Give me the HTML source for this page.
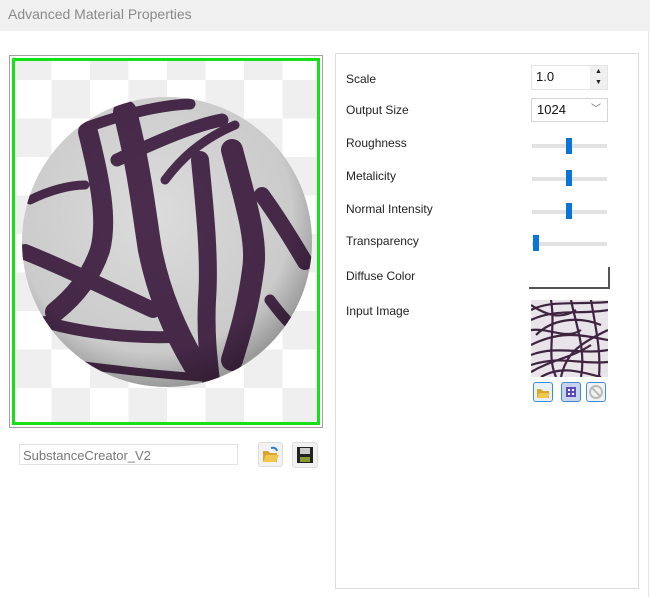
<!DOCTYPE html>
<html><head><style>
body{margin:0;width:650px;height:597px;background:#fff;position:relative;overflow:hidden;font-family:"Liberation Sans",sans-serif;}
.hdr{position:absolute;left:0;top:0;width:650px;height:31px;background:#f0f0f0;}
.hdr span{position:absolute;left:8px;top:6px;font-size:14px;color:#8a8a8a;}
.vl{position:absolute;left:648px;top:31px;width:1px;height:566px;background:#e6e6e6;}
.lab{position:absolute;left:346px;font-size:12px;color:#222;}
.panel{position:absolute;left:335px;top:53px;width:302px;height:534px;border:1px solid #dcdcdc;}
.track{position:absolute;left:532px;width:75px;height:4px;background:#e2e2e2;}
.thumb{position:absolute;width:6px;height:16px;background:#0a74d8;}
.ib{position:absolute;width:18px;height:18px;border:1px solid #3c8ad8;border-radius:3px;background:#e8f0fa;}
</style></head><body>
<div class="hdr"><span>Advanced Material Properties</span></div>
<div class="vl"></div>

<div style="position:absolute;left:9px;top:55px;width:312px;height:371px;border:1px solid #a0a0a0;"></div>
<svg style="position:absolute;left:0;top:0" width="330" height="430">
<defs>
<pattern id="ck" x="13" y="41.5" width="77" height="77" patternUnits="userSpaceOnUse">
<rect width="77" height="77" fill="#fff"/><rect width="38.5" height="38.5" fill="#efefef"/><rect x="38.5" y="38.5" width="38.5" height="38.5" fill="#efefef"/>
</pattern>
<radialGradient id="sh" cx="0.45" cy="0.4" r="0.6">
<stop offset="0" stop-color="#000" stop-opacity="0"/><stop offset="0.8" stop-color="#000" stop-opacity="0.08"/><stop offset="1" stop-color="#000" stop-opacity="0.3"/>
</radialGradient>
<clipPath id="cp"><circle cx="167" cy="242" r="145"/></clipPath>
</defs>
<rect x="13" y="59" width="306" height="365" fill="url(#ck)"/>
<rect x="13.5" y="59.5" width="305" height="364" fill="none" stroke="#16e016" stroke-width="3"/>
<circle cx="167" cy="242" r="145" fill="#dcdcdc"/>
<g clip-path="url(#cp)" fill="none" stroke="#4b2c4d" stroke-linecap="round">
<path d="M88,132 C100,180 108,220 100,250 C90,280 70,300 55,312" stroke-width="20"/>
<path d="M125,112 C140,170 145,220 150,250 C160,300 180,340 195,365" stroke-width="24"/>
<path d="M200,160 C205,210 210,260 207,300 C205,340 210,370 212,390" stroke-width="18"/>
<path d="M232,150 C245,200 258,240 253,270 C248,310 238,340 232,360" stroke-width="22"/>
<path d="M262,195 C280,220 295,245 305,262" stroke-width="16"/>
<path d="M25,252 C70,270 120,295 153,310" stroke-width="16"/>
<path d="M45,322 C90,335 140,338 172,337" stroke-width="12"/>
<path d="M85,128 C120,115 160,105 190,104" stroke-width="11"/>
<path d="M117,160 C160,140 195,125 222,120" stroke-width="13"/>
<path d="M165,180 C180,160 200,140 235,125" stroke-width="9"/>
<path d="M30,200 C50,190 70,185 85,185" stroke-width="9"/>
<path d="M80,365 C120,370 160,375 210,378" stroke-width="8"/>
<path d="M270,300 C285,320 295,330 300,330" stroke-width="11"/>
</g>
<circle cx="167" cy="242" r="145" fill="url(#sh)"/>
</svg>

<div style="position:absolute;left:19px;top:444px;width:219px;height:21px;border:1px solid #e2e2e2;font-size:13px;color:#777;line-height:21px;padding-left:3px;box-sizing:border-box;">SubstanceCreator_V2</div>
<div style="position:absolute;left:258px;top:442px;width:23px;height:23px;border-radius:3px;background:#f2f2f2;border:1px solid #ddd;">
<svg width="23" height="23"><path d="M4,8 h5 l2,2 h7 v9 h-14z" fill="#d9a530"/><path d="M4,19 l3,-7 h13 l-3,7z" fill="#f0c850"/><path d="M12,5 q5,-1 6,3" stroke="#2f7fd0" stroke-width="2" fill="none"/></svg></div>
<div style="position:absolute;left:292px;top:442px;width:24px;height:24px;border-radius:3px;background:#f2f2f2;border:1px solid #ddd;">
<svg width="24" height="24"><rect x="4" y="4" width="16" height="16" fill="#222"/><rect x="7" y="5" width="10" height="6" fill="#ccc"/><rect x="7" y="14" width="10" height="5" fill="#8a9a30"/></svg></div>

<div class="panel"></div>
<div class="lab" style="top:72px">Scale</div>
<div class="lab" style="top:103px">Output Size</div>
<div class="lab" style="top:136px">Roughness</div>
<div class="lab" style="top:169px">Metalicity</div>
<div class="lab" style="top:202px">Normal Intensity</div>
<div class="lab" style="top:234px">Transparency</div>
<div class="lab" style="top:269px">Diffuse Color</div>
<div class="lab" style="top:304px">Input Image</div>

<div style="position:absolute;left:531px;top:65px;width:77px;height:25px;border:1px solid #e4e4e4;box-sizing:border-box;font-size:13px;line-height:22px;padding-left:4px;color:#111;">1.0</div>
<div style="position:absolute;left:590px;top:66px;width:17px;height:23px;background:#f0f0f0;font-size:7px;text-align:center;line-height:11px;color:#222;">▲<br>▼</div>
<div style="position:absolute;left:531px;top:98px;width:77px;height:24px;border:1px solid #d4d4d4;box-sizing:border-box;font-size:13px;line-height:22px;padding-left:5px;color:#111;">1024<span style="position:absolute;right:6px;top:0;color:#666;font-size:10px;">﹀</span></div>

<div class="track" style="top:144px"></div><div class="thumb" style="left:566px;top:138px"></div>
<div class="track" style="top:177px"></div><div class="thumb" style="left:566px;top:170px"></div>
<div class="track" style="top:210px"></div><div class="thumb" style="left:566px;top:203px"></div>
<div class="track" style="top:242px"></div><div class="thumb" style="left:533px;top:235px"></div>

<div style="position:absolute;left:529px;top:267px;width:79px;height:20px;border-right:2px solid #555;border-bottom:2px solid #555;"></div>

<svg style="position:absolute;left:531px;top:300px" width="77" height="77">
<rect width="77" height="77" fill="#e8e4ea"/>
<g fill="none" stroke="#3f2440" stroke-width="2.2">
<path d="M0,10 C20,0 40,5 77,2"/><path d="M0,20 C25,8 50,15 77,10"/><path d="M5,35 C20,20 45,15 70,25"/>
<path d="M0,45 C30,30 50,35 77,40"/><path d="M0,55 C25,45 50,55 77,50"/><path d="M0,65 C30,55 50,65 77,62"/>
<path d="M10,77 C30,65 50,72 70,77"/><path d="M40,0 C45,25 55,50 50,77"/><path d="M60,0 C65,30 70,50 68,77"/>
<path d="M20,0 C25,30 15,55 25,77"/><path d="M0,30 C20,28 35,40 50,30"/>
<path d="M0,5 C15,15 30,20 45,10"/><path d="M30,77 C35,55 45,45 77,30"/><path d="M0,72 C20,60 40,58 60,45"/>
</g>
</svg>
<div class="ib" style="left:533px;top:382px"><svg width="18" height="18"><path d="M3,6 h4 l2,2 h6 v7 h-12z" fill="#d9a530"/><path d="M3,15 l2,-5 h11 l-2,5z" fill="#f0c850"/></svg></div>
<div class="ib" style="left:561px;top:382px;background:#c8d4ea"><svg width="18" height="18"><rect x="4" y="4" width="10" height="10" fill="#5a4ac0"/><rect x="6" y="6" width="2" height="2" fill="#fff"/><rect x="10" y="10" width="2" height="2" fill="#fff"/><rect x="10" y="6" width="2" height="2" fill="#fff"/><rect x="6" y="10" width="2" height="2" fill="#fff"/></svg></div>
<div class="ib" style="left:586px;top:382px;background:#f2f2f2"><svg width="18" height="18"><circle cx="9" cy="9" r="6" fill="none" stroke="#bbb" stroke-width="2"/><path d="M5,5 L13,13" stroke="#bbb" stroke-width="2"/></svg></div>
</body></html>
